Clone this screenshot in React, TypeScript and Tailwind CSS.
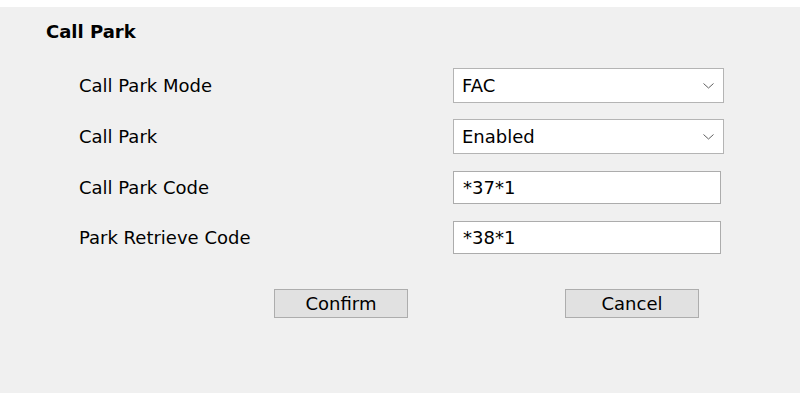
import React from 'react';

const font = { fontFamily: '"DejaVu Sans", Verdana, sans-serif' };

const Chevron = () => (
  <svg width="11" height="6" viewBox="0 0 11 6" className="shrink-0">
    <path d="M0.5 0.5 L5.5 5 L10.5 0.5" fill="none" stroke="#5f5f5f" strokeWidth="1" />
  </svg>
);

const SelectBox: React.FC<{ value: string }> = ({ value }) => (
  <div className="flex h-[35px] w-[271px] items-center justify-between border border-[#b4b4b4] bg-white pl-[8px] pr-[9px] text-[18px] text-black">
    <span>{value}</span>
    <Chevron />
  </div>
);

const TextBox: React.FC<{ value: string }> = ({ value }) => (
  <div className="flex h-[33px] w-[268px] items-center border border-[#acacac] bg-white pl-[9px] text-[18px] text-black">
    {value}
  </div>
);

const Row: React.FC<{ label: string; children: React.ReactNode; className?: string }> = ({ label, children, className }) => (
  <div className={`flex items-center ${className || ''}`}>
    <div className="w-[407px] pl-[33px] text-[18px] text-black">{label}</div>
    {children}
  </div>
);

export default function App() {
  return (
    <div className="h-[393px] w-[800px] bg-white pt-[7px]" style={font}>
      <div className="h-full bg-[#f0f0f0] pl-[46px] pt-[14px]">
        <h1 className="text-[18px] font-bold leading-[22px] text-black">Call Park</h1>
        <Row label="Call Park Mode" className="mt-[25px]">
          <SelectBox value="FAC" />
        </Row>
        <Row label="Call Park" className="mt-[16px]">
          <SelectBox value="Enabled" />
        </Row>
        <Row label="Call Park Code" className="mt-[17px]">
          <TextBox value="*37*1" />
        </Row>
        <Row label="Park Retrieve Code" className="mt-[17px]">
          <TextBox value="*38*1" />
        </Row>
        <div className="mt-[35px] flex">
          <button className="ml-[228px] h-[29px] w-[134px] border border-[#adadad] bg-[#e1e1e1] text-[18px] text-black">
            Confirm
          </button>
          <button className="ml-[157px] h-[29px] w-[134px] border border-[#adadad] bg-[#e1e1e1] text-[18px] text-black">
            Cancel
          </button>
        </div>
      </div>
    </div>
  );
}
